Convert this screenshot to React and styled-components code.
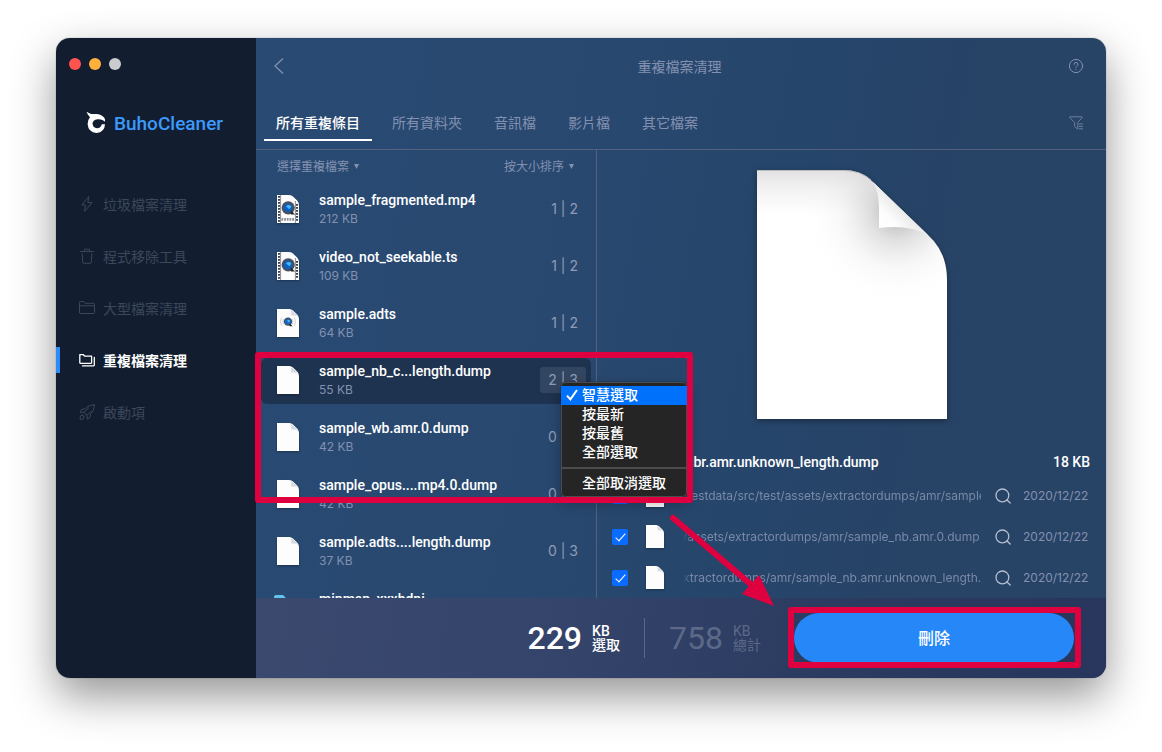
import React from "react";
import styled, { createGlobalStyle } from "styled-components";

const GlobalStyle = createGlobalStyle`
  *, *::before, *::after { box-sizing: border-box; }
  html, body { margin: 0; }
  body {
    background: #fff;
    font-family: Inter, "Noto Sans CJK TC", sans-serif;
    font-size: 14px;
    color: #fff;
    overflow: hidden;
  }
  button, select, input { font: inherit; color: inherit; margin: 0; padding: 0; border: 0; background: none; }
  h1, h2, p { margin: 0; font: inherit; }
  svg { display: block; flex: none; }
`;

const muted = "#8391b0";
const red = "#de003f";
const display = `Roboto, "Noto Sans CJK TC", sans-serif`;

const Page = styled.div`
  height: 100vh;
  padding: 38px 56px 74px;
  display: flex;
`;

const AppWindow = styled.div`
  flex: 1;
  min-width: 0;
  display: flex;
  border-radius: 14px;
  box-shadow: 0 0 1px rgba(0, 0, 0, 0.6), 0 18px 44px rgba(0, 0, 0, 0.42);
`;

/* ---------- sidebar ---------- */

const Sidebar = styled.aside`
  flex: 0 0 200px;
  padding-top: 20px;
  background: #121e2f;
  border-radius: 14px 0 0 14px;
`;

const Lights = styled.div`
  display: flex;
  gap: 8px;
  padding-left: 13px;
`;

const Light = styled.button`
  width: 12px;
  height: 12px;
  border-radius: 50%;
  background: ${(p) => p.$color};
`;

const Brand = styled.div`
  display: flex;
  align-items: center;
  gap: 8px;
  height: 26px;
  margin: 40px 0 42px 30px;
  color: #3b99fc;
  font-family: ${display};
  font-size: 19px;
  font-weight: 500;
`;

const NavItem = styled.a`
  display: flex;
  align-items: center;
  gap: 8px;
  height: 52px;
  padding-left: 23px;
  position: relative;
  text-decoration: none;
  color: ${(p) => (p.$active ? "#fff" : "#3c475b")};
  font-weight: ${(p) => (p.$active ? 700 : 400)};
  &::before {
    content: "";
    display: ${(p) => (p.$active ? "block" : "none")};
    position: absolute;
    left: 0;
    width: 4px;
    height: 26px;
    background: #2a8bfb;
  }
`;

/* ---------- main frame ---------- */

const Main = styled.main`
  flex: 1;
  min-width: 0;
  display: flex;
  flex-direction: column;
  border-radius: 0 14px 14px 0;
  background: linear-gradient(100deg, #284a73 0%, #29486f 38%, #26466c 52%, #274366 80%);
`;

const TopBar = styled.header`
  display: grid;
  grid-template-columns: 24px 1fr 20px;
  align-items: center;
  height: 56px;
  padding: 0 20px 0 13px;
  color: ${muted};
`;

const IconButton = styled.button`
  display: flex;
  align-items: center;
  justify-content: center;
  width: 20px;
  height: 20px;
  color: ${(p) => p.$color || muted};
`;

const Title = styled.h1`
  text-align: center;
`;

const TabBar = styled.div`
  display: flex;
  align-items: center;
  justify-content: space-between;
  padding: 10px 20px 8px 8px;
  border-bottom: 1px solid #53617e;
`;

const Tabs = styled.nav`
  display: flex;
  gap: 8px;
`;

const Tab = styled.button`
  height: 37px;
  padding: 0 12px 1px;
  white-space: nowrap;
  color: ${(p) => (p.$active ? "#fff" : muted)};
  font-weight: ${(p) => (p.$active ? 500 : 400)};
  box-shadow: ${(p) => (p.$active ? "inset 0 -2px #fff" : "none")};
`;

const Body = styled.div`
  flex: 1;
  min-height: 0;
  display: flex;
  position: relative;
`;

/* ---------- duplicates list ---------- */

const ListPane = styled.section`
  flex: 0 0 340px;
  overflow: hidden;
  padding: 0 5px;
`;

const ListHead = styled.div`
  display: flex;
  justify-content: space-between;
  align-items: center;
  height: 32px;
  margin-bottom: 5px;
  padding: 0 17px 0 16px;
  font-size: 12px;
  color: ${muted};
`;

const Picker = styled.label`
  display: flex;
  align-items: center;
  gap: 5px;
`;

const PickerSelect = styled.select`
  appearance: none;
  width: ${(p) => p.$chars}em;
  outline: none;
  option { color: #222; }
`;

const Row = styled.div`
  display: flex;
  align-items: center;
  height: 46px;
  margin-bottom: 11px;
  padding: 0 5px 2px 16px;
  border-radius: 6px;
  background: ${(p) => (p.$selected ? "#1e334f" : "transparent")};
`;

const RowText = styled.div`
  flex: 1;
  min-width: 0;
  margin-left: 20px;
  white-space: nowrap;
`;

const FileName = styled.p`
  font-family: ${display};
  line-height: 19px;
  font-weight: 500;
`;

const FileSize = styled.p`
  font-size: 12px;
  line-height: 18px;
  color: ${muted};
`;

const Count = styled.button`
  height: 26px;
  padding: 0 8px 2px;
  border-radius: 3px;
  color: #8f9bb7;
  background: ${(p) => (p.$selected ? "#334661" : "transparent")};
`;

/* ---------- detail pane ---------- */

const DetailPane = styled.section`
  flex: 1;
  min-width: 0;
  overflow: hidden;
  display: flex;
  flex-direction: column;
  padding: 20px 16px 0 15px;
  border-left: 1px solid #53617e;
`;

const Preview = styled.div`
  display: flex;
  justify-content: center;
  padding-left: 2px;
`;

const DetailHead = styled.div`
  display: flex;
  justify-content: space-between;
  flex: none;
  margin: 33px 0 3px;
  font-family: ${display};
  line-height: 20px;
  font-weight: 500;
`;

const CopyRow = styled.div`
  flex: none;
  display: flex;
  align-items: center;
  height: 41px;
  font-size: 12px;
  color: ${muted};
`;

const CopyLabel = styled.label`
  flex: 1;
  min-width: 0;
  display: flex;
  align-items: center;
`;

const Tick = styled.input`
  appearance: none;
  flex: none;
  display: flex;
  justify-content: center;
  width: 16px;
  height: 16px;
  margin-right: 18px;
  border-radius: 2px;
  background: #0a6cff;
  &:checked::after {
    content: "";
    width: 5px;
    height: 10px;
    margin-top: 2px;
    border: solid #fff;
    border-width: 0 1px 1px 0;
    transform: rotate(42deg);
  }
`;

const Path = styled.span`
  flex: 1;
  min-width: 0;
  margin: 0 12px 0 19px;
  overflow: hidden;
  white-space: nowrap;
  color: #7a89a8;
  mask-image: linear-gradient(90deg, transparent, #000 8px);
`;

const FileDate = styled.time`
  width: 67px;
  margin-left: 10px;
  white-space: nowrap;
`;

/* ---------- footer ---------- */

const Footer = styled.footer`
  display: flex;
  align-items: center;
  justify-content: flex-end;
  height: 80px;
  padding-right: 32px;
  border-radius: 0 0 14px 0;
  background: linear-gradient(100deg, #3b496f 0%, #35446b 35%, #2c3b60 65%, #28355c 100%);
`;

const Stat = styled.div`
  display: flex;
  align-items: center;
  gap: 10px;
  font-family: ${display};
  color: ${(p) => (p.$dim ? "#5c6988" : "#fff")};
  font-weight: ${(p) => (p.$dim ? 400 : 500)};
`;

const StatValue = styled.span`
  font-size: 32px;
  line-height: 40px;
`;

const StatUnit = styled.span`
  font-size: 14px;
  line-height: 14px;
`;

const StatRule = styled.div`
  width: 1px;
  height: 40px;
  margin: 0 24px;
  background: #5b6885;
`;

const DeleteWrap = styled.div`
  position: relative;
  margin-left: 33px;
`;

const DeleteButton = styled.button`
  display: block;
  width: 280px;
  height: 50px;
  padding-bottom: 3px;
  border-radius: 25px;
  background: #2687f9;
  font-size: 16px;
  font-weight: 500;
`;

/* ---------- layers over the content ---------- */

const Menu = styled.div`
  position: absolute;
  left: 305px;
  top: 232px;
  width: 126px;
  padding: 4px 0;
  background: #252525;
  border-radius: 5px;
  box-shadow: inset 0 0 0 1px #4c4c4c, 0 0 1px #000, 0 6px 14px rgba(0, 0, 0, 0.3);
`;

const MenuItem = styled.button`
  display: grid;
  grid-template-columns: 16px 1fr;
  align-items: center;
  width: 100%;
  height: 19px;
  padding-left: 5px;
  text-align: left;
  line-height: 17px;
  padding-bottom: 2px;
  font-weight: 500;
  background: ${(p) => (p.$current ? "#0071fb" : "transparent")};
  span { grid-column: 2; }
`;

const MenuRule = styled.div`
  height: 2px;
  margin: 5px 0;
  background: #4c4c4c;
`;

const ListMark = styled.div`
  position: absolute;
  left: -1px;
  top: 202px;
  width: 438px;
  height: 151px;
  border: 6px solid ${red};
  border-radius: 3px;
  pointer-events: none;
`;

const ButtonMark = styled.div`
  position: absolute;
  inset: -6px -7px -5px -6px;
  border: 6px solid ${red};
  border-radius: 3px;
  pointer-events: none;
`;

const Arrow = styled.svg`
  position: absolute;
  left: 410px;
  top: 360px;
  pointer-events: none;
`;

/* ---------- drawings ---------- */

const Line = ({ size = 16, width = 1, children }) => (
  <svg width={size} height={size} viewBox="0 0 16 16" fill="none" stroke="currentColor" strokeWidth={width} strokeLinejoin="round" strokeLinecap="round">
    {children}
  </svg>
);

const navIcons = {
  bolt: <Line><path d="M9.6 0.8 2.8 9h3.6L5.6 15.4 13 6.6H9.2z" /></Line>,
  trash: <Line><path d="M1.5 3.5h13M5.6 3.3V1.2h4.8v2.1M3.2 5.6l.4 8.2q.1 1.5 1.5 1.5h5.8q1.4 0 1.5-1.5l.4-8.2" /></Line>,
  folder: <Line><path d="M.5 12.6V2.4q0-.9.9-.9h3.2l1.6 1.8h8.4q.9 0 .9.9v8.4q0 .9-.9.9H1.4q-.9 0-.9-.9zM.5 5.8h15" /></Line>,
  folders: <Line width={1.3}><path d="M.8 10.8V2.7h3.6l1.3 1.5h6.9v6.6q0 .5-.5.5H1.3q-.5 0-.5-.5zM15.3 5.5v7.6q0 .7-.7.7H3.4" /></Line>,
  rocket: <Line><path d="M15.2 1Q9.4.8 6.4 4.8L2.6 5.4 1 8.2l3.8.2 3.2 3 .4 3.8 2.6-2 .6-3.6Q15.4 6.8 15.2 1zM4.8 8.4 9.6 4M8 11.4 12 7.4M2.6 11.2a2 2 0 1 1-.1 3.9L1 15.2l.1-1.8q.1-1.8 1.5-2.2z" /></Line>,
};

const Logo = () => (
  <svg width="20" height="24" viewBox="0 0 20 24" fill="#fff">
    <path d="M.4.8 5 3Q8 3 10 3 15.4 3.2 18.3 6.8 19.6 8.6 18.9 10.8 16.6 7.8 11.4 8.2 6.7 8.8 6.5 12.8 7 17 11 17.3 14.8 17 15.8 13.2L19 13.2Q18.6 21.2 10.5 21.9 2.2 21.4 1.6 13 1.6 8.8 4 6.2Q1.9 4.2.4.8z" />
  </svg>
);

const FileIcon = ({ kind, width = 22, height = 28 }) => (
  <svg width={width} height={height} viewBox="0 0 22 28" style={{ filter: "drop-shadow(0 1px 1px rgba(0,0,0,.3))" }}>
    <path d="M0 0h12.4Q14.6.2 16 1.6l4.4 4.2Q22 7.6 22 10v18H0z" fill="#fdfdfd" />
    {kind !== "movie" && kind !== "mpeg" && <path d="M13 .2q1.4.6 1.2 6.2 5.4-.2 7 1.4-1-1.6-2.4-3z" fill="#d7dade" />}
    {(kind === "movie" || kind === "mpeg") && (
      <g>
        <path d="M2 1v26M20 9v18" stroke="#262b35" strokeWidth="1.8" strokeDasharray="1.8 1.2" />
        <path d="M3.6 0v28M18.4 6v22" stroke="#6a6e77" strokeWidth=".8" />
        <circle cx="11.2" cy="12.8" r="6.6" fill="#4b4f58" />
        <path d="m13 14.4 5 5h-4z" fill="#25272d" />
        <circle cx="11" cy="12.8" r="4.4" fill="#0b5fc0" />
        <path d="M9 11.4q2.4-2.6 5.4 0l-2 2.8z" fill="#49b6f5" />
      </g>
    )}
    {kind === "mpeg" && <path d="M4.4 24.4h13.4" stroke="#8d9097" strokeWidth="2.6" strokeDasharray="1.8 .9" />}
    {kind === "audio" && (
      <g>
        <path d="M4.6 8.6q-2.4 4 0 8M17.4 8.6q2.4 4 0 8M6.6 9.8q-1.4 2.8 0 5.6M15.4 9.8q1.4 2.8 0 5.6" fill="none" stroke="#c3c6cb" strokeWidth=".8" />
        <circle cx="11" cy="12.6" r="4.2" fill="#4b4f58" />
        <path d="m12 13.6 3.6 3.6h-3z" fill="#25272d" />
        <circle cx="11" cy="12.6" r="2.9" fill="#0d6ad0" />
        <path d="M10 11.6q1.8-1.4 3.2.2l-1.4 1.6z" fill="#52bdf6" />
      </g>
    )}
  </svg>
);

const FolderSlot = styled.div`
  margin: 0 -3px;
`;

const FolderIcon = () => (
  <svg width="28" height="26" viewBox="0 0 28 26">
    <path d="M0 2q0-2 2-2h7l3 3h14q2 0 2 2v19q0 2-2 2H2q-2 0-2-2z" fill="#62c4ec" />
  </svg>
);

const Sheet = () => (
  <svg width="190" height="249" viewBox="0 0 190 249" style={{ filter: "drop-shadow(0 2px 3px rgba(0,0,0,.35))" }}>
    <defs>
      <linearGradient id="sheetTop" x1="0" y1="0" x2="0" y2="1">
        <stop offset="0" stopColor="#e2e2e2" />
        <stop offset=".08" stopColor="#f3f3f3" />
        <stop offset=".18" stopColor="#fff" />
      </linearGradient>
      <radialGradient id="sheetCurl" gradientUnits="userSpaceOnUse" cx="140" cy="42" r="94">
        <stop offset="0" stopColor="#777" stopOpacity=".6" />
        <stop offset=".3" stopColor="#999" stopOpacity=".3" />
        <stop offset=".6" stopColor="#bbb" stopOpacity=".1" />
        <stop offset="1" stopColor="#fff" stopOpacity="0" />
      </radialGradient>
      <linearGradient id="sheetFold" gradientUnits="userSpaceOnUse" x1="148" y1="35" x2="124" y2="58">
        <stop offset="0" stopColor="#e4e4e4" />
        <stop offset=".6" stopColor="#fcfcfc" />
        <stop offset="1" stopColor="#fff" />
      </linearGradient>
    </defs>
    <path d="M0 0H86Q104 0 116 12L171 65Q190 82 190 110V249H0z" fill="url(#sheetTop)" />
    <path d="M0 0H86Q104 0 116 12L171 65Q190 82 190 110V249H0z" fill="url(#sheetCurl)" />
    <path d="M116 12Q122 22 122 38V58Q152 54 171 65z" fill="url(#sheetFold)" />
    <path d="M0 .5H86Q104 .5 114 10" fill="none" stroke="#b9bbbf" />
  </svg>
);

const Caret = () => (
  <svg width="5" height="5" viewBox="0 0 5 5" fill="currentColor"><path d="M0 0h5L2.5 5z" /></svg>
);

/* ---------- data ---------- */

const nav = [
  ["bolt", "垃圾檔案清理"],
  ["trash", "程式移除工具"],
  ["folder", "大型檔案清理"],
  ["folders", "重複檔案清理"],
  ["rocket", "啟動項"],
];

const tabs = ["所有重複條目", "所有資料夾", "音訊檔", "影片檔", "其它檔案"];

const files = [
  { name: "sample_fragmented.mp4", size: "212 KB", count: "1 | 2", kind: "mpeg" },
  { name: "video_not_seekable.ts", size: "109 KB", count: "1 | 2", kind: "movie" },
  { name: "sample.adts", size: "64 KB", count: "1 | 2", kind: "audio" },
  { name: "sample_nb_c...length.dump", size: "55 KB", count: "2 | 3", selected: true },
  { name: "sample_wb.amr.0.dump", size: "42 KB", count: "0 | 3" },
  { name: "sample_opus....mp4.0.dump", size: "42 KB", count: "0 | 3" },
  { name: "sample.adts....length.dump", size: "37 KB", count: "0 | 3" },
];

const copies = [
  "/testdata/src/test/assets/extractordumps/amr/sample_nb_cbr.amr",
  "/assets/extractordumps/amr/sample_nb.amr.0.dump",
  "xtractordumps/amr/sample_nb.amr.unknown_length.dump",
];

export default function App() {
  return (
    <Page>
      <GlobalStyle />
      <AppWindow>
        <Sidebar>
          <Lights>
            <Light $color="#ff5350" aria-label="關閉" />
            <Light $color="#fdb13c" aria-label="最小化" />
            <Light $color="#cbcbcd" aria-label="縮放" />
          </Lights>
          <Brand><Logo />BuhoCleaner</Brand>
          <nav>
            {nav.map(([icon, label]) => (
              <NavItem key={label} href="#" $active={icon === "folders"}>
                {navIcons[icon]}
                {label}
              </NavItem>
            ))}
          </nav>
        </Sidebar>

        <Main>
          <TopBar>
            <IconButton aria-label="返回">
              <svg width="10" height="16" viewBox="0 0 10 16" fill="none" stroke="currentColor" strokeWidth="1.3"><path d="M9 .5 1 8l8 7.5" /></svg>
            </IconButton>
            <Title>重複檔案清理</Title>
            <IconButton aria-label="說明">
              <Line><circle cx="8" cy="8" r="6.6" /><path d="M6 6.4q.1-2 2-2t2 1.8q0 1-1 1.6T8 9.4M8 11.4v.2" /></Line>
            </IconButton>
          </TopBar>
          <TabBar>
            <Tabs>
              {tabs.map((t, i) => <Tab key={t} $active={i === 0}>{t}</Tab>)}
            </Tabs>
            <IconButton aria-label="篩選" $color="#6f7e9c">
              <Line><path d="M2 1.8h12v1L9.8 7.4v6.8L6.6 11.6V7.4L2 2.8zM11.4 9h3.2M11.4 11.4h3.2M11.4 13.8h3.2" /></Line>
            </IconButton>
          </TabBar>

          <Body>
            <ListPane>
              <ListHead>
                <Picker>
                  <PickerSelect $chars={6} aria-label="選擇"><option>選擇重複檔案</option></PickerSelect>
                  <Caret />
                </Picker>
                <Picker>
                  <PickerSelect $chars={5} aria-label="排序"><option>按大小排序</option></PickerSelect>
                  <Caret />
                </Picker>
              </ListHead>
              {files.map((f) => (
                <Row key={f.name} $selected={f.selected}>
                  <FileIcon kind={f.kind} />
                  <RowText>
                    <FileName>{f.name}</FileName>
                    <FileSize>{f.size}</FileSize>
                  </RowText>
                  <Count $selected={f.selected}>{f.count}</Count>
                </Row>
              ))}
              <Row>
                <FolderSlot><FolderIcon /></FolderSlot>
                <RowText>
                  <FileName>mipmap_xxxhdpi</FileName>
                  <FileSize>36 KB</FileSize>
                </RowText>
              </Row>
            </ListPane>

            <DetailPane>
              <Preview><Sheet /></Preview>
              <DetailHead>
                <h2>sample_nb_cbr.amr.unknown_length.dump</h2>
                <span>18 KB</span>
              </DetailHead>
              {copies.map((path) => (
                <CopyRow key={path}>
                  <CopyLabel>
                    <Tick type="checkbox" defaultChecked />
                    <FileIcon width={18} height={23} />
                    <Path>{path}</Path>
                  </CopyLabel>
                  <IconButton aria-label="顯示" $color="#b5bfd0">
                    <Line width={1.3}><circle cx="7.4" cy="7.4" r="6.4" /><path d="m12 12 3.2 3" /></Line>
                  </IconButton>
                  <FileDate>2020/12/22</FileDate>
                </CopyRow>
              ))}
            </DetailPane>

            <Menu role="menu">
              <MenuItem role="menuitem" $current>
                <svg width="12" height="12" viewBox="0 0 12 12" fill="none" stroke="#fff" strokeWidth="2"><path d="M1 6.6 4.4 10.4 11 1" /></svg>
                <span>智慧選取</span>
              </MenuItem>
              <MenuItem role="menuitem"><span>按最新</span></MenuItem>
              <MenuItem role="menuitem"><span>按最舊</span></MenuItem>
              <MenuItem role="menuitem"><span>全部選取</span></MenuItem>
              <MenuRule />
              <MenuItem role="menuitem"><span>全部取消選取</span></MenuItem>
            </Menu>
            <ListMark />
            <Arrow width="112" height="100" viewBox="0 0 112 100">
              <path d="M7 8 88 77" stroke={red} strokeWidth="6" strokeLinecap="round" />
              <path d="M108 96 76 84 93 65z" fill={red} />
            </Arrow>
          </Body>

          <Footer>
            <Stat>
              <StatValue>229</StatValue>
              <StatUnit>KB<br />選取</StatUnit>
            </Stat>
            <StatRule />
            <Stat $dim>
              <StatValue>758</StatValue>
              <StatUnit>KB<br />總計</StatUnit>
            </Stat>
            <DeleteWrap>
              <DeleteButton>刪除</DeleteButton>
              <ButtonMark />
            </DeleteWrap>
          </Footer>
        </Main>
      </AppWindow>
    </Page>
  );
}
